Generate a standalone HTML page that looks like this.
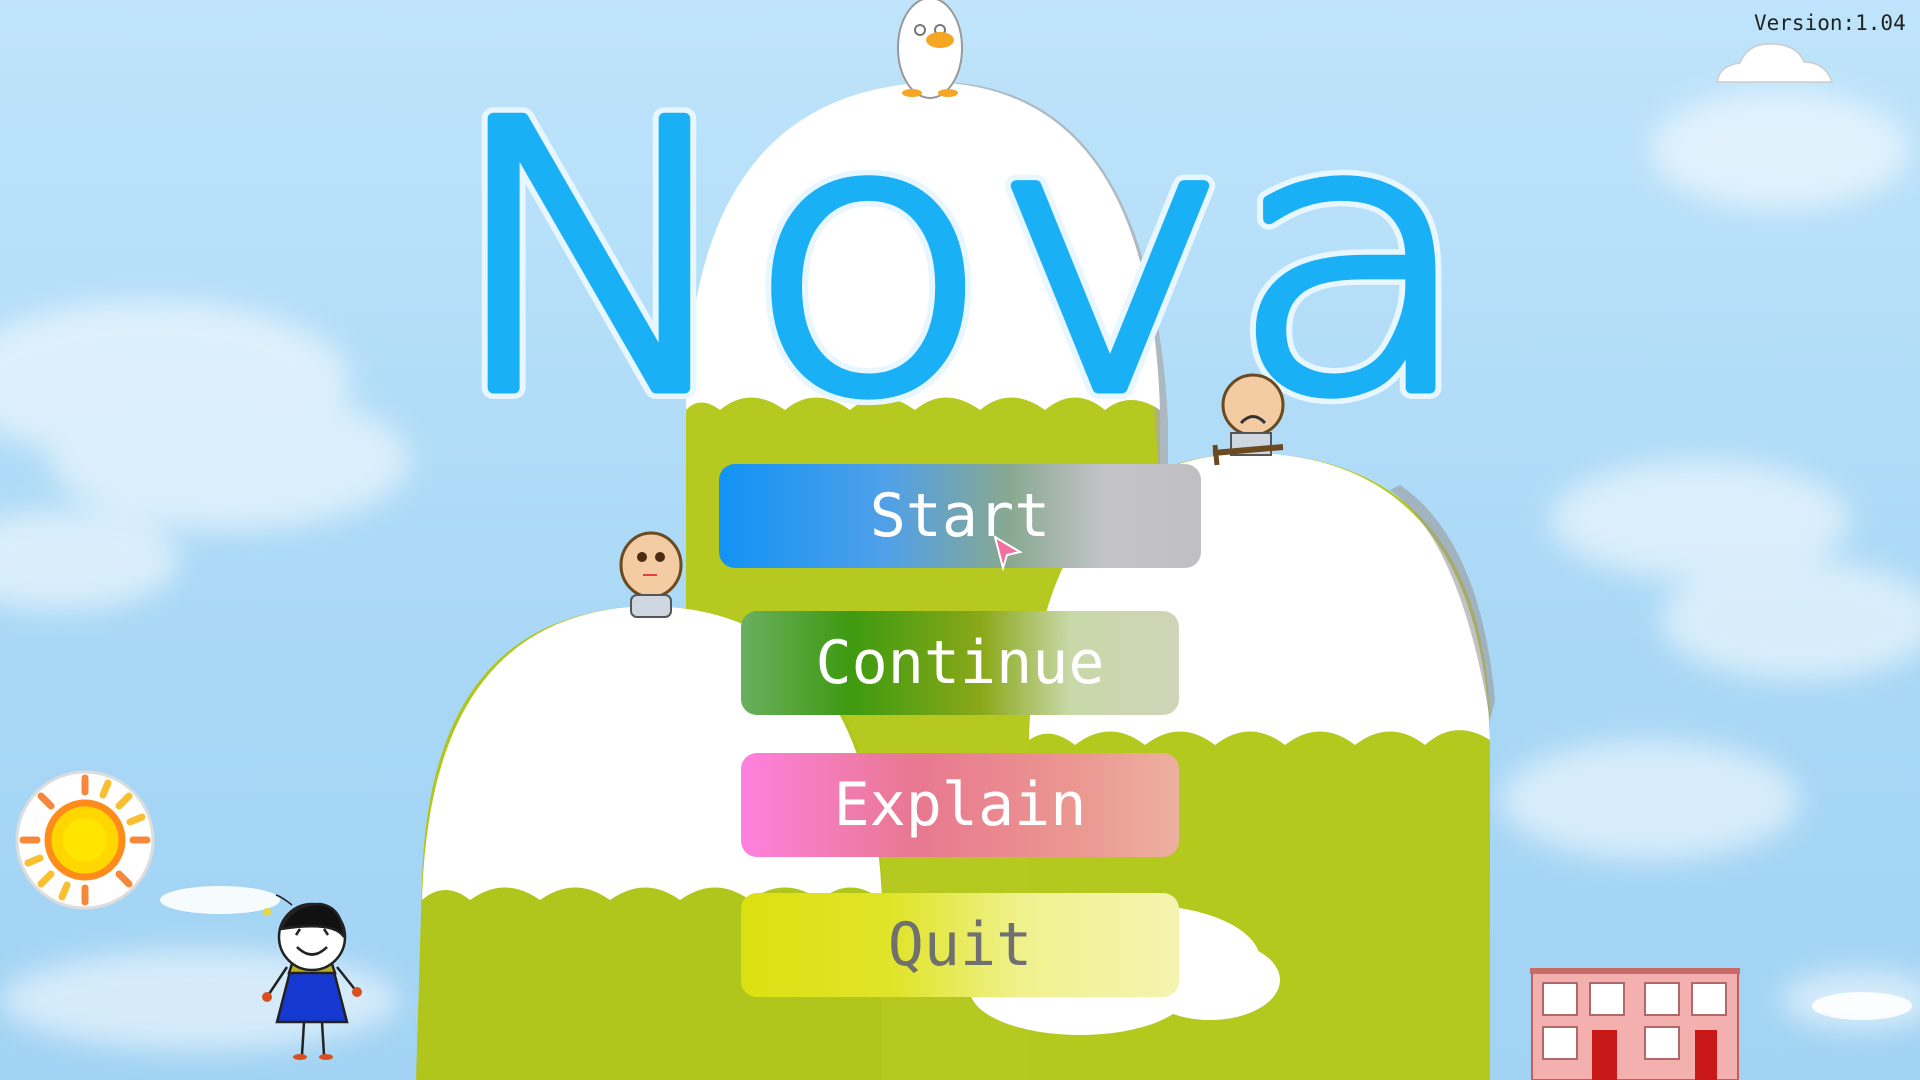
<!DOCTYPE html>
<html><head><meta charset="utf-8"><style>
html,body{margin:0;padding:0;width:1920px;height:1080px;overflow:hidden}
body{background:linear-gradient(#bfe4fb,#a9d8f6 60%,#a2d3f4);position:relative;font-family:"DejaVu Sans Mono","Liberation Mono",monospace}
svg{position:absolute;left:0;top:0}
.btn{position:absolute;border-radius:16px;display:flex;align-items:center;justify-content:center;font-family:"DejaVu Sans Mono","Liberation Mono",monospace;font-size:60px;color:#fff}
.ver{position:absolute;left:1754px;top:11px;font-size:21px;color:#222;font-family:"DejaVu Sans Mono","Liberation Mono",monospace}
</style></head><body>
<svg width="1920" height="1080" viewBox="0 0 1920 1080">
<defs>
<filter id="bl" x="-20%" y="-50%" width="140%" height="200%"><feGaussianBlur stdDeviation="14"/></filter>
</defs>
<g fill="#fff" opacity="0.55" filter="url(#bl)">
<ellipse cx="150" cy="380" rx="200" ry="80"/><ellipse cx="230" cy="460" rx="180" ry="70"/><ellipse cx="60" cy="560" rx="120" ry="50"/>
<ellipse cx="1700" cy="520" rx="150" ry="60"/><ellipse cx="1800" cy="620" rx="140" ry="60"/><ellipse cx="1650" cy="800" rx="150" ry="60"/>
<ellipse cx="1780" cy="150" rx="130" ry="60"/><ellipse cx="200" cy="1000" rx="200" ry="50"/><ellipse cx="1860" cy="1000" rx="80" ry="30"/>
</g>
<g fill="#fff" opacity="0.9"><ellipse cx="220" cy="900" rx="60" ry="14"/><ellipse cx="1862" cy="1006" rx="50" ry="14"/></g>
<path d="M1717 82 Q1720 65 1740 63 Q1748 42 1775 44 Q1798 46 1804 62 Q1825 62 1832 82 Z" fill="#fff" stroke="#ccc" stroke-width="1.5"/>
<path d="M686 1080 L686 420 Q690 90 935 82 Q1150 90 1160 420 L1160 1080 Z" fill="#b5c920"/>
<path d="M720 1080 L730 700 Q760 640 820 620 L850 1080Z" fill="#9fb21a" opacity="0.6"/>
<path d="M945 82 Q1150 90 1168 420 L1168 600 L1155 420 Q1140 120 945 82Z" fill="#aaa" opacity="0.7"/>
<path d="M686 410 Q690 90 935 82 Q1150 90 1160 410 Q1130 390 1105 410 Q1075 385 1045 410 Q1010 385 980 410 Q945 385 915 410 Q880 385 850 410 Q815 385 785 410 Q750 385 720 410 Q700 395 686 410Z" fill="#fff"/>
<path d="M1029 1080 L1029 720 Q1035 455 1255 453 Q1480 460 1490 720 L1490 1080 Z" fill="#b3c91e"/>
<path d="M1029 740 Q1035 455 1255 453 Q1480 460 1490 740 Q1455 718 1425 745 Q1390 718 1355 745 Q1320 718 1285 745 Q1250 718 1215 745 Q1180 718 1145 745 Q1110 718 1075 745 Q1050 725 1029 740Z" fill="#fff"/>
<path d="M1390 490 Q1460 540 1490 720 L1495 700 Q1480 540 1400 485Z" fill="#999" opacity="0.6"/>
<path d="M416 1080 L422 880 Q430 610 650 606 Q870 610 882 880 L882 1080 Z" fill="#b0c61c"/>
<path d="M422 900 Q430 610 650 606 Q870 610 882 900 Q850 875 820 900 Q785 875 750 900 Q715 875 680 900 Q645 875 610 900 Q575 875 540 900 Q505 875 470 900 Q445 880 422 900Z" fill="#fff"/>
<g fill="#fff"><ellipse cx="1140" cy="960" rx="120" ry="55"/><ellipse cx="1080" cy="990" rx="110" ry="45"/><ellipse cx="1210" cy="980" rx="70" ry="40"/></g>
<g font-family="DejaVu Sans, sans-serif" font-weight="200" font-size="370" stroke-linejoin="round" stroke-linecap="round">
<text x="445" y="388" textLength="1030" lengthAdjust="spacingAndGlyphs" fill="#e8f6ff" stroke="#e8f6ff" stroke-width="22">Nova</text>
<text x="445" y="388" textLength="1030" lengthAdjust="spacingAndGlyphs" fill="#1ab0f6" stroke="#1ab0f6" stroke-width="11">Nova</text>
</g>
<g transform="translate(930,48)">
<ellipse cx="0" cy="0" rx="32" ry="50" fill="#fff" stroke="#999" stroke-width="2"/>
<circle cx="-10" cy="-18" r="5" fill="none" stroke="#777" stroke-width="2"/><circle cx="10" cy="-18" r="5" fill="none" stroke="#777" stroke-width="2"/>
<ellipse cx="10" cy="-8" rx="14" ry="8" fill="#f5a623"/>
<ellipse cx="-18" cy="45" rx="10" ry="4" fill="#f5a623"/><ellipse cx="18" cy="45" rx="10" ry="4" fill="#f5a623"/>
</g>
<g transform="translate(1253,405)">
<circle cx="0" cy="0" r="30" fill="#f4cca4" stroke="#6b4a20" stroke-width="3"/>
<path d="M-12 18 Q0 5 12 18" fill="none" stroke="#333" stroke-width="3"/>
<rect x="-22" y="28" width="40" height="22" fill="#cfd8e0" stroke="#555" stroke-width="2"/>
<path d="M-40 48 L30 42" stroke="#6b4a20" stroke-width="6"/><path d="M-38 40 L-36 60" stroke="#6b4a20" stroke-width="5"/>
</g>
<g transform="translate(651,565)">
<ellipse cx="0" cy="0" rx="30" ry="32" fill="#f4cca4" stroke="#6b4a20" stroke-width="3"/>
<circle cx="-9" cy="-8" r="5" fill="#4a2a10"/><circle cx="9" cy="-8" r="5" fill="#4a2a10"/>
<path d="M-8 10 L6 10" stroke="#e04040" stroke-width="2"/>
<rect x="-20" y="30" width="40" height="22" rx="6" fill="#cfd8e0" stroke="#555" stroke-width="2"/>
</g>
<g transform="translate(85,840)">
<circle r="68" fill="#fff" stroke="#ddd" stroke-width="3"/>
<g stroke-width="7" stroke-linecap="round">
<g stroke="#f5883a"><path d="M0 -48 L0 -62"/><path d="M0 48 L0 62"/><path d="M-48 0 L-62 0"/><path d="M48 0 L62 0"/><path d="M34 34 L44 44"/><path d="M-34 -34 L-44 -44"/></g>
<g stroke="#f8c030"><path d="M34 -34 L44 -44"/><path d="M-34 34 L-44 44"/><path d="M18 -45 L23 -57"/><path d="M-45 18 L-57 23"/><path d="M45 -18 L57 -23"/><path d="M-18 45 L-23 57"/></g>
</g>
<circle r="37" fill="#ffd700" stroke="#ff8c1a" stroke-width="7"/>
<circle r="22" fill="#ffe500"/>
</g>
<g transform="translate(312,937)" stroke="#222" stroke-width="2.5">
<path d="M-25 30 L-45 60 M25 30 L45 55 M-8 85 L-10 118 M10 85 L12 118" fill="none"/>
<path d="M-20 27 L20 27 L35 85 L-35 85 Z" fill="#1538d0"/>
<path d="M-20 27 L20 27 L23 36 L-23 36Z" fill="#b8b020"/>
<circle r="33" fill="#fff"/>
<path d="M-31 -8 Q-20 -33 8 -33 Q30 -30 32 0 Q22 -16 -31 -8Z" fill="#111"/>
<path d="M-15 10 Q0 25 15 10" fill="none"/>
<path d="M-12 -8 L-16 -2 M12 -8 L16 -2" />
<path d="M-20 -32 Q-30 -40 -36 -42" fill="none" stroke-width="1.5"/>
<circle cx="-45" cy="60" r="5" fill="#d85020" stroke="none"/><circle cx="45" cy="55" r="5" fill="#d85020" stroke="none"/>
<ellipse cx="-12" cy="120" rx="7" ry="3" fill="#d85020" stroke="none"/><ellipse cx="14" cy="120" rx="7" ry="3" fill="#d85020" stroke="none"/>
</g>
<circle cx="267" cy="912" r="4" fill="#e8d840"/>
<g>
<rect x="1532" y="970" width="206" height="110" fill="#f4b0ae" stroke="#c06060" stroke-width="2"/>
<rect x="1530" y="968" width="210" height="6" fill="#c86a66"/>
<g fill="#fff" stroke="#b06868" stroke-width="2">
<rect x="1543" y="983" width="34" height="32"/><rect x="1590" y="983" width="34" height="32"/><rect x="1645" y="983" width="34" height="32"/><rect x="1692" y="983" width="34" height="32"/>
<rect x="1543" y="1027" width="34" height="32"/><rect x="1645" y="1027" width="34" height="32"/>
</g>
<rect x="1592" y="1030" width="25" height="50" fill="#c81818"/><rect x="1695" y="1030" width="22" height="50" fill="#c81818"/>
</g>
</svg>
<div class="ver">Version:1.04</div>
<div class="btn" style="left:719px;top:464px;width:482px;height:104px;background:linear-gradient(90deg,#1193f5,#50a0e8 35%,#88a890 60%,#c4c4c8 80%,#c0c0c4)">Start</div>
<div class="btn" style="left:741px;top:611px;width:438px;height:104px;background:linear-gradient(90deg,#6aaf60,#3e9a10 25%,#8aa818 55%,#c8d8a8 75%,#d0d4b8)">Continue</div>
<div class="btn" style="left:741px;top:753px;width:438px;height:104px;background:linear-gradient(90deg,#ff80de,#e87890 40%,#eb9690 75%,#ecb0a0)">Explain</div>
<div class="btn" style="left:741px;top:893px;width:438px;height:104px;background:linear-gradient(90deg,#dde010,#e0e42a 35%,#f0f290 65%,#f4f4b0);color:#707070">Quit</div>
<svg width="1920" height="1080" style="pointer-events:none"><path d="M995 537 L1020 552 L1007 555 L1003 568 Z" fill="#f070a0" stroke="#fff" stroke-width="2"/></svg>
</body></html>
